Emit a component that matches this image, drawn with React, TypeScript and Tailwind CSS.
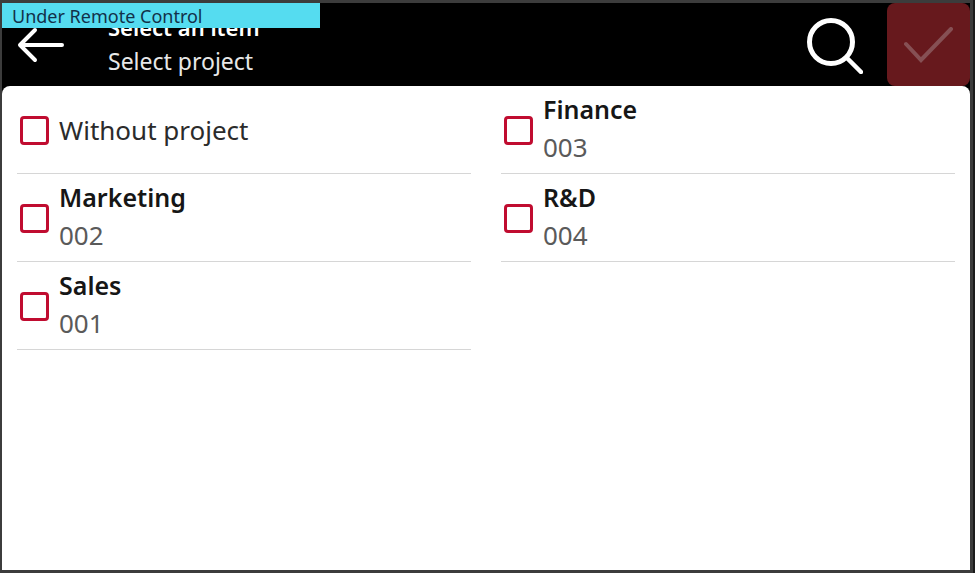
import React, { useState } from 'react';

type Project = {
  name: string;
  code?: string;
};

const projects: Project[] = [
  { name: 'Without project' },
  { name: 'Finance', code: '003' },
  { name: 'Marketing', code: '002' },
  { name: 'R&D', code: '004' },
  { name: 'Sales', code: '001' },
];

const BackIcon = () => (
  <svg width="48" height="38" viewBox="0 0 48 38" fill="none" stroke="currentColor" strokeWidth="4" strokeLinecap="round" strokeLinejoin="round">
    <path d="M46 19H5M19 4L4 19L19 34" />
  </svg>
);

const SearchIcon = () => (
  <svg width="58" height="58" viewBox="0 0 58 58" fill="none" stroke="currentColor" strokeLinecap="round">
    <circle cx="26" cy="26" r="21.5" strokeWidth="5" />
    <path d="M42 42L56 56" strokeWidth="4.5" />
  </svg>
);

const CheckIcon = () => (
  <svg width="50" height="36" viewBox="0 0 50 36" fill="none" stroke="currentColor" strokeWidth="4" strokeLinecap="round" strokeLinejoin="miter">
    <path d="M2 17L17 33L47 2" />
  </svg>
);

const App: React.FC = () => {
  const [selected, setSelected] = useState<string | null>(null);

  return (
    <div className="min-h-screen bg-[#1c1c1c] pr-0.5 font-['Noto_Sans','Open_Sans',sans-serif]">
      <div className="flex min-h-screen flex-col border-t-3 border-r-3 border-b-3 border-l-2 border-[#3c3c3c] bg-black">
        <header className="relative flex h-[83px] shrink-0 bg-black text-white">
          <button type="button" aria-label="Back" className="flex w-[106px] items-center pl-3.5">
            <BackIcon />
          </button>
          <div className="flex flex-1 flex-col justify-end pb-2">
            <h1 className="text-[22px] leading-[34px] font-semibold">Select an item</h1>
            <p className="text-[23px] leading-[34px] text-[#e8e8e8]">Select project</p>
          </div>
          <button type="button" aria-label="Search" className="flex w-[106px] items-center justify-center">
            <SearchIcon />
          </button>
          <button
            type="button"
            aria-label="Confirm"
            disabled={selected === null}
            className="flex w-[83px] items-center justify-center rounded-lg bg-[#c8102e] text-white disabled:bg-[#67191d] disabled:text-[#865054]"
          >
            <CheckIcon />
          </button>

          <div role="status" className="absolute top-0 left-0 h-[25px] w-[318px] bg-[#55dcf0] pl-2.5 text-lg leading-[26px] text-[#12314a]">
            Under Remote Control
          </div>
        </header>

        <main className="flex-1 rounded-t-lg bg-white px-[15px]">
          <ul className="grid grid-cols-2 gap-x-[30px]">
            {projects.map((project) => (
              <li key={project.name} className="border-b border-[#d6d6d6]">
                <label className="flex h-[87px] items-center gap-2.5 pt-px pl-[3px]">
                  <input
                    type="checkbox"
                    checked={selected === project.name}
                    onChange={() => setSelected(selected === project.name ? null : project.name)}
                    className="size-[29px] appearance-none rounded-sm border-3 border-[#c00c30] bg-white checked:bg-[#c00c30]"
                  />
                  {project.code ? (
                    <span className="flex flex-col pb-1 leading-[38px]">
                      <span className="text-[25px] font-semibold text-[#161616]">{project.name}</span>
                      <span className="text-[26px] text-[#5a5a5a]">{project.code}</span>
                    </span>
                  ) : (
                    <span className="text-[26px] leading-[38px] text-[#2b2b2b]">{project.name}</span>
                  )}
                </label>
              </li>
            ))}
          </ul>
        </main>
      </div>
    </div>
  );
};

export default App;
